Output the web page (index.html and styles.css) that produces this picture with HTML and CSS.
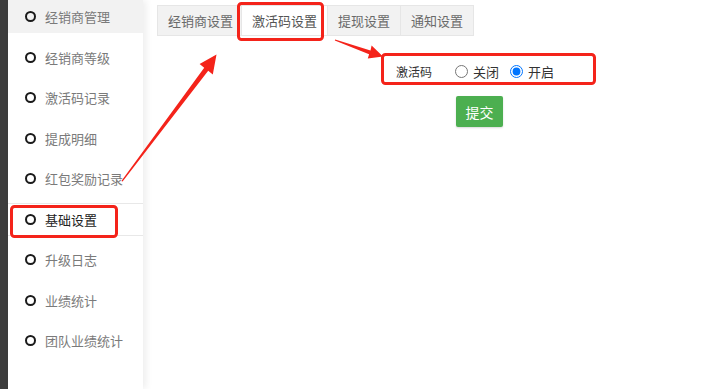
FILE: index.html
```html
<!DOCTYPE html>
<html lang="zh-CN">
<head>
    <meta charset="UTF-8">
    <meta name="viewport" content="width=device-width, initial-scale=1.0">
    <title>基础设置</title>
    <link rel="stylesheet" href="styles.css">
</head>
<body>
    <div class="page">
        <div class="strip"></div>
        <ul class="sidebar">
            <li class="nav-item hover"><span class="dot"></span>经销商管理</li>
            <li class="nav-item"><span class="dot"></span>经销商等级</li>
            <li class="nav-item"><span class="dot"></span>激活码记录</li>
            <li class="nav-item"><span class="dot"></span>提成明细</li>
            <li class="nav-item"><span class="dot"></span>红包奖励记录</li>
            <li class="nav-item active"><span class="dot"></span>基础设置</li>
            <li class="nav-item"><span class="dot"></span>升级日志</li>
            <li class="nav-item"><span class="dot"></span>业绩统计</li>
            <li class="nav-item"><span class="dot"></span>团队业绩统计</li>
        </ul>
        <div class="main">
            <div class="tabs">
                <div class="tab first">经销商设置</div>
                <div class="tab current">激活码设置</div>
                <div class="tab">提现设置</div>
                <div class="tab">通知设置</div>
            </div>
            <form class="setting-form">
                <div class="form-row">
                    <span class="form-label">激活码</span>
                    <label class="radio"><input type="radio" name="code_open" value="0">关闭</label>
                    <label class="radio"><input type="radio" name="code_open" value="1" checked>开启</label>
                </div>
                <button type="button" class="btn-submit">提交</button>
            </form>
        </div>

        <!-- annotations -->
        <svg class="marks" width="725" height="389" viewBox="0 0 725 389">
            <g fill="none" stroke="#f4231a" stroke-width="3">
                <rect x="238.5" y="3.5" width="84" height="36" rx="3"/>
                <rect x="382.5" y="54.5" width="212" height="29" rx="3"/>
                <rect x="11.5" y="206.5" width="105" height="30" rx="3"/>
            </g>
            <g fill="#f4231a">
                <polygon points="121.4,181 204.2,67.8 199.6,64.1 216.5,54.5 212.8,74.5 208.2,70.8 122.6,181.6"/>
                <polygon points="334.8,40.6 369.1,54.2 367.8,58.6 383,56.5 371.6,45.4 370.5,50.4 335.2,39.4"/>
            </g>
        </svg>
    </div>
</body>
</html>
```

FILE: styles.css
```css
* {
    box-sizing: border-box;
}
body {
    margin: 0;
    font-family: "Noto Sans CJK SC", "Noto Sans", sans-serif;
    background-color: #fff;
}
.page {
    position: relative;
    display: flex;
    width: 725px;
    height: 389px;
    overflow: hidden;
}
.strip {
    width: 8px;
    background-color: #3d3d3d;
}
.sidebar {
    list-style: none;
    margin: 0;
    padding: 0;
    width: 135px;
    display: flex;
    flex-direction: column;
    gap: 7.5px;
    background-color: #fff;
    box-shadow: 3px 0 7px rgba(0, 0, 0, 0.07);
    position: relative;
    z-index: 1;
}
.nav-item {
    height: 33px;
    display: flex;
    align-items: center;
    gap: 9px;
    padding-left: 17px;
    font-size: 13px;
    color: #7a7a7a;
}
.nav-item.hover {
    background-color: #f2f2f2;
}
.nav-item.active {
    color: #222;
    border-top: 1px solid #e8e8e8;
    border-bottom: 1px solid #e8e8e8;
}
.dot {
    width: 11px;
    height: 11px;
    border: 2px solid #1a1a1a;
    border-radius: 50%;
}
.main {
    flex: 1;
    padding: 5px 0 0 14px;
}
.tabs {
    display: flex;
}
.tab {
    height: 31px;
    line-height: 29px;
    padding: 0 10px;
    font-size: 13px;
    color: #6a6a6a;
    background-color: #f2f2f2;
    border: 1px solid #e6e6e6;
}
.tab.first {
    padding: 0 8px 0 10px;
}
.tab + .tab {
    border-left: none;
}
.tab.current {
    background-color: #fff;
    color: #555;
}
.setting-form {
    margin-top: 26px;
}
.form-row {
    display: flex;
    align-items: center;
    padding-left: 239px;
    height: 18px;
    font-size: 13px;
    color: #333;
}
.form-label {
    width: 57px;
    font-size: 12px;
}
.radio {
    display: flex;
    align-items: center;
    margin-right: 9px;
}
.radio input {
    margin: 0 5px 0 2px;
    width: 13px;
    height: 13px;
}
.btn-submit {
    display: block;
    margin: 16px 0 0 299px;
    width: 47px;
    height: 31px;
    padding: 0;
    border: none;
    border-radius: 2px;
    background-color: #4caf50;
    color: #fff;
    font-family: inherit;
    font-size: 14px;
    box-shadow: 0 1px 2px rgba(0, 0, 0, 0.15);
    cursor: pointer;
}
.marks {
    position: absolute;
    left: 0;
    top: 0;
    z-index: 2;
    pointer-events: none;
}
```
